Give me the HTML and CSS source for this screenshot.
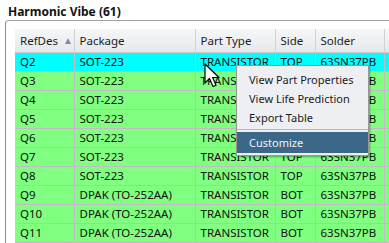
FILE: index.html
```html
<!DOCTYPE html>
<html lang="en">
<head>
    <meta charset="UTF-8">
    <title>Harmonic Vibe</title>
    <link rel="stylesheet" href="styles.css">
</head>
<body>
    <div class="title">Harmonic Vibe (61)</div>
    <div class="panel">
        <table class="grid">
            <colgroup>
                <col class="c-ref">
                <col class="c-pkg">
                <col class="c-type">
                <col class="c-side">
                <col class="c-solder">
                <col class="c-more">
            </colgroup>
            <thead>
                <tr>
                    <th>RefDes <span class="sort">&#9650;</span></th>
                    <th>Package</th>
                    <th>Part Type</th>
                    <th>Side</th>
                    <th>Solder</th>
                    <th></th>
                </tr>
            </thead>
            <tbody>
                <tr class="sel"><td>Q2</td><td>SOT-223</td><td>TRANSISTOR</td><td>TOP</td><td>63SN37PB</td><td></td></tr>
                <tr><td>Q3</td><td>SOT-223</td><td>TRANSISTOR</td><td>TOP</td><td>63SN37PB</td><td></td></tr>
                <tr><td>Q4</td><td>SOT-223</td><td>TRANSISTOR</td><td>TOP</td><td>63SN37PB</td><td></td></tr>
                <tr><td>Q5</td><td>SOT-223</td><td>TRANSISTOR</td><td>TOP</td><td>63SN37PB</td><td></td></tr>
                <tr><td>Q6</td><td>SOT-223</td><td>TRANSISTOR</td><td>TOP</td><td>63SN37PB</td><td></td></tr>
                <tr><td>Q7</td><td>SOT-223</td><td>TRANSISTOR</td><td>TOP</td><td>63SN37PB</td><td></td></tr>
                <tr><td>Q8</td><td>SOT-223</td><td>TRANSISTOR</td><td>TOP</td><td>63SN37PB</td><td></td></tr>
                <tr><td>Q9</td><td>DPAK (TO-252AA)</td><td>TRANSISTOR</td><td>BOT</td><td>63SN37PB</td><td></td></tr>
                <tr><td>Q10</td><td>DPAK (TO-252AA)</td><td>TRANSISTOR</td><td>BOT</td><td>63SN37PB</td><td></td></tr>
                <tr><td>Q11</td><td>DPAK (TO-252AA)</td><td>TRANSISTOR</td><td>BOT</td><td>63SN37PB</td><td></td></tr>
            </tbody>
        </table>
    </div>

    <ul class="menu">
        <li>View Part Properties</li>
        <li>View Life Prediction</li>
        <li>Export Table</li>
        <li class="sep"></li>
        <li class="active">Customize</li>
    </ul>

    <svg class="cursor" width="16" height="26" viewBox="0 0 16 26">
        <path d="M1 1 L1 20 L5.5 15.5 L9 23.5 L12 22.2 L8.6 14.5 L15 14.5 Z" fill="#fff" stroke="#000" stroke-width="1.2" stroke-linejoin="round"/>
    </svg>
</body>
</html>
```

FILE: styles.css
```css
body {
    margin: 0;
    background-color: #fff;
    font-family: "Noto Sans", "Open Sans", sans-serif;
    font-size: 11.5px;
    color: #111;
    overflow: hidden;
    position: relative;
    width: 389px;
    height: 243px;
}
.title {
    font-weight: bold;
    font-size: 12px;
    padding: 3px 0 0 8px;
    height: 17px;
    line-height: 17px;
}
.panel {
    margin-left: 5px;
    border-top: 1px solid #a5a5a5;
    border-left: 1px solid #8a8a8a;
    border-top-left-radius: 4px;
    padding: 8px 0 0 9px;
    width: 440px;
}
.grid {
    border-collapse: collapse;
    table-layout: fixed;
    width: 429px;
}
.c-ref { width: 59px; }
.c-pkg { width: 121px; }
.c-type { width: 80px; }
.c-side { width: 40px; }
.c-solder { width: 69px; }
.c-more { width: 60px; }
.grid th,
.grid td {
    box-sizing: border-box;
    padding: 0 0 0 5px;
    text-align: left;
    white-space: nowrap;
    overflow: hidden;
}
.grid th {
    height: 23px;
    font-weight: normal;
    color: #1e1e1e;
    background: linear-gradient(#f6f7f9, #e6e7ea);
    border-right: 1px solid #d0d1d5;
    border-bottom: 1px solid #c9cacf;
}
.sort {
    color: #6f8cb5;
    font-size: 10px;
    margin-left: 2px;
    vertical-align: 1px;
}
.grid td {
    height: 19px;
    background-color: #80ff80;
    border: 1px solid #c6b9c6;
    border-top: none;
}
.grid tr.sel td {
    background-color: #00ffff;
}
.grid td:first-child {
    border-left: none;
}
.menu {
    position: absolute;
    left: 236px;
    top: 65px;
    width: 131px;
    margin: 0;
    padding: 4px 0 2px 0;
    list-style: none;
    font-size: 11px;
    background-color: #eeeff2;
    border: 1px solid #979797;
    box-shadow: 1px 1px 2px rgba(0, 0, 0, 0.35);
    color: #1b1b1b;
}
.menu li {
    height: 19px;
    line-height: 19px;
    padding-left: 12px;
}
.menu li.sep {
    height: 0;
    border-top: 1px solid #b9b9bd;
    margin: 2px 0 2px 0;
}
.menu li.active {
    height: 21px;
    line-height: 21px;
    background-color: #3b6889;
    color: #eef3f7;
}
.cursor {
    position: absolute;
    left: 204px;
    top: 63px;
}
```
